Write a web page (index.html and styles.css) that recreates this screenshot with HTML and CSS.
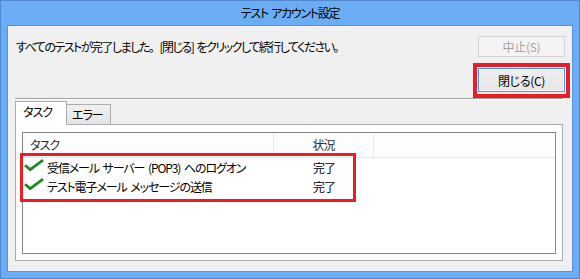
FILE: index.html
```html
<!DOCTYPE html>
<html lang="ja">
<head>
<meta charset="utf-8">
<title>テスト アカウント設定</title>
<link rel="stylesheet" href="styles.css">
</head>
<body>
<div class="window">
  <div class="titlebar">テスト アカウント設定</div>
  <div class="client">
    <div class="row1">
      <span class="msg">すべてのテストが完了しました<span class="fw">。</span>[閉じる] をクリックして続行してください<span class="fw">。</span></span>
      <div class="btn btn-disabled">中止(S)</div>
    </div>
    <div class="row2">
      <div class="btn btn-default">閉じる(C)</div>
    </div>
    <div class="sep"></div>
    <div class="tabs">
      <div class="tab tab-active">タスク</div>
      <div class="tab tab-inactive">エラー</div>
    </div>
    <div class="panel">
      <div class="list">
        <div class="lhead">
          <div class="c1 hcell">タスク</div>
          <div class="c2 hcell hcenter">状況</div>
          <div class="c3"></div>
        </div>
        <div class="lrow">
          <div class="c1 cell">
            <svg class="check" width="20" height="12" viewBox="0 0 20 12"><path d="M1 6.2 L6.2 10.6 L19 1.2" fill="none" stroke="#1c8a25" stroke-width="2.8" stroke-linejoin="miter"/></svg>
            <span>受信メール サーバー (POP3) へのログオン</span>
          </div>
          <div class="c2 cell ccenter">完了</div>
        </div>
        <div class="lrow">
          <div class="c1 cell">
            <svg class="check" width="20" height="12" viewBox="0 0 20 12"><path d="M1 6.2 L6.2 10.6 L19 1.2" fill="none" stroke="#1c8a25" stroke-width="2.8" stroke-linejoin="miter"/></svg>
            <span>テスト電子メール メッセージの送信</span>
          </div>
          <div class="c2 cell ccenter">完了</div>
        </div>
      </div>
    </div>
    <div class="mark mark-btn"></div>
    <div class="mark mark-rows"></div>
  </div>
</div>
</body>
</html>
```
FILE: styles.css
```css
* { box-sizing: border-box; }
html, body { margin: 0; padding: 0; }
body {
  width: 580px;
  height: 279px;
  overflow: hidden;
  font-family: "Noto Sans CJK JP", "Noto Sans", sans-serif;
  font-size: 12px;
  font-feature-settings: "palt" 1;
  letter-spacing: -1px;
  word-spacing: 2px;
  color: #000;
}
.fw { font-feature-settings: normal; }
.window {
  width: 580px;
  height: 279px;
  border: 1px solid #4f88cf;
  background: #6badf5;
  padding: 0 6px 6px 6px;
  display: flex;
  flex-direction: column;
}
.titlebar {
  height: 24px;
  line-height: 24px;
  text-align: center;
  color: #000;
  letter-spacing: -1.3px;
}
.client {
  position: relative;
  flex: 1;
  border: 1px solid #5a94da;
  background: #f0f0f0;
  padding: 0 7px 10px 7px;
  display: flex;
  flex-direction: column;
}
.row1 {
  margin-top: 10px;
  height: 21px;
  display: flex;
  align-items: center;
  justify-content: space-between;
  padding-left: 1px;
}
.msg { line-height: 21px; letter-spacing: -1.5px; }
.row2 {
  margin-top: 11px;
  height: 24px;
  display: flex;
  justify-content: flex-end;
}
.btn {
  width: 87px;
  display: flex;
  align-items: center;
  justify-content: center;
  letter-spacing: -0.3px;
}
.btn-disabled {
  height: 21px;
  border: 1px solid #d3d3d3;
  background: #f4f4f4;
  color: #a2a2a2;
}
.btn-default {
  height: 24px;
  border: 1px solid #3c9bff;
  background: linear-gradient(#efefef, #e6e6e6);
  box-shadow: inset 0 0 0 1px #f6faff;
}
.sep {
  margin-top: 6px;
  height: 2px;
  border-top: 1px solid #a0a0a0;
  border-bottom: 1px solid #ffffff;
  margin-right: 2px;
}
.tabs {
  margin-top: 1px;
  height: 23px;
  display: flex;
  align-items: flex-end;
}
.tab {
  border: 1px solid #acacac;
  border-bottom: 0;
}
.tab-active {
  position: relative;
  z-index: 1;
  width: 52px;
  height: 24px;
  margin-bottom: -1px;
  background: #fff;
  padding: 2px 0 0 7px;
  line-height: 16px;
}
.tab-inactive {
  width: 45px;
  height: 20px;
  margin-left: -1px;
  background: linear-gradient(#f0f0f0, #e5e5e5);
  padding: 2px 0 0 5px;
  line-height: 16px;
}
.panel {
  height: 137px;
  margin-right: 2px;
  border: 1px solid #acacac;
  background: #fff;
  padding: 7px 6px 6px 6px;
}
.list {
  height: 122px;
  border: 1px solid #828790;
  background: #fff;
}
.lhead {
  height: 25px;
  display: flex;
  background: #fdfdfe;
  border-bottom: 1px solid #e5e8ef;
}
.c1 { width: 251px; }
.c2 { width: 100px; }
.c3 { flex: 1; }
.hcell {
  border-right: 1px solid #e8e8ea;
  line-height: 24px;
  color: #1e2b3c;
}
.lhead .c1 { padding-left: 7px; }
.hcenter { text-align: center; }
.lrow {
  height: 19px;
  display: flex;
}
.cell {
  line-height: 19px;
  display: flex;
  align-items: center;
  letter-spacing: -1.1px;
}
.lrow .c1 { padding-left: 1px; }
.check {
  flex: none;
  margin-right: 3px;
  align-self: flex-start;
  margin-top: 1px;
}
.ccenter { justify-content: center; }
.mark {
  position: absolute;
  border-style: solid;
  border-color: #ec1c24;
  pointer-events: none;
}
.mark-btn {
  left: 465px;
  top: 37px;
  width: 97px;
  height: 35px;
  border-width: 4px;
}
.mark-rows {
  left: 12px;
  top: 127px;
  width: 336px;
  height: 49px;
  border-width: 3px;
}
```
